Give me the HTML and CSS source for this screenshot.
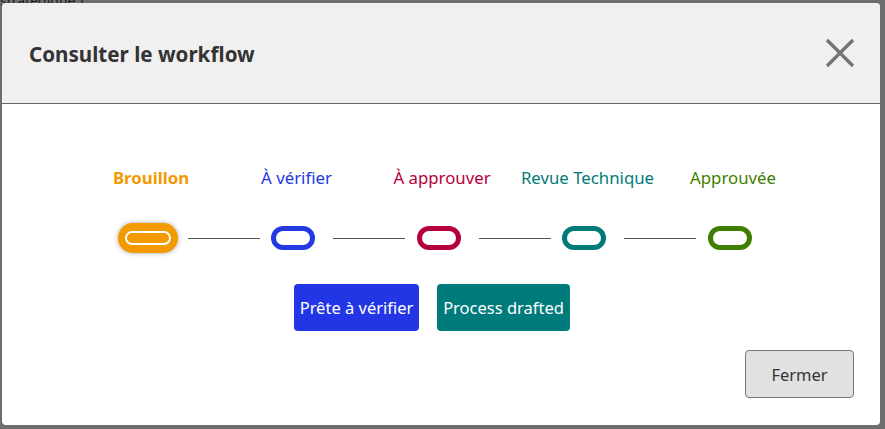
FILE: index.html
```html
<!DOCTYPE html>
<html lang="fr">
<head>
<meta charset="utf-8">
<title>Consulter le workflow</title>
<link rel="stylesheet" href="styles.css">
</head>
<body>
<div class="backdrop">
  <div class="behind">stratégique )</div>
  <div class="dialog">
    <header class="dialog-header">
      <h1 class="dialog-title">Consulter le workflow</h1>
      <button class="close-btn" aria-label="Fermer">
        <svg width="30" height="30" viewBox="0 0 30 30"><path d="M2 2 L28 28 M28 2 L2 28" stroke="#737373" stroke-width="3.2" fill="none"/></svg>
      </button>
    </header>
    <div class="dialog-body">
      <div class="labels">
        <span class="label label-draft">Brouillon</span>
        <span class="label label-verify">À vérifier</span>
        <span class="label label-approve">À approuver</span>
        <span class="label label-tech">Revue Technique</span>
        <span class="label label-done">Approuvée</span>
      </div>
      <div class="track">
        <div class="slot"><span class="pill pill-current"><span class="pill-inner"></span></span></div>
        <span class="line"></span>
        <div class="slot"><span class="pill pill-verify"></span></div>
        <span class="line"></span>
        <div class="slot"><span class="pill pill-approve"></span></div>
        <span class="line"></span>
        <div class="slot"><span class="pill pill-tech"></span></div>
        <span class="line"></span>
        <div class="slot"><span class="pill pill-done"></span></div>
      </div>
      <div class="actions">
        <button class="action action-verify">Prête à vérifier</button>
        <button class="action action-tech">Process drafted</button>
      </div>
    </div>
    <footer class="dialog-footer">
      <button class="close-footer">Fermer</button>
    </footer>
  </div>
</div>
</body>
</html>
```
FILE: styles.css
```css
* { box-sizing: border-box; }
html, body { margin: 0; padding: 0; }
body {
  font-family: "Noto Sans", "Open Sans", sans-serif;
  background: #6e6e6e;
  width: 885px;
  height: 429px;
  overflow: hidden;
}
.backdrop {
  position: relative;
  width: 885px;
  height: 429px;
  padding: 3px 5px 4px 2px;
}
.behind {
  position: absolute;
  left: 0;
  top: -9px;
  font-size: 14px;
  color: #1c1c1c;
}
.dialog {
  position: relative;
  width: 878px;
  height: 422px;
  background: #fff;
  border-radius: 4px;
  display: flex;
  flex-direction: column;
  overflow: hidden;
}
.dialog-header {
  height: 101px;
  flex: none;
  background: #f0f0f0;
  border-bottom: 1px solid #666;
  display: flex;
  align-items: center;
  justify-content: space-between;
  padding: 0 25px 0 27px;
}
.dialog-title {
  margin: 0;
  font-size: 20.6px;
  font-weight: 700;
  color: #333;
  padding-top: 2px;
}
.close-btn {
  border: 0;
  background: transparent;
  padding: 0;
  width: 30px;
  height: 30px;
  display: flex;
}
.dialog-body {
  flex: 1;
  display: flex;
  flex-direction: column;
  align-items: center;
  padding-top: 62px;
}
.labels {
  display: grid;
  grid-template-columns: repeat(5, 145.5px);
  justify-items: center;
  height: 24px;
  line-height: 24px;
  font-size: 16.8px;
  margin-left: 2px;
  white-space: nowrap;
}
.label-draft { color: #f39a00; font-weight: 700; }
.label-verify { color: #2339e2; }
.label-approve { color: #b5003b; }
.label-tech { color: #007b78; }
.label-done { color: #3f7e00; }
.track {
  display: flex;
  align-items: center;
  height: 30px;
  margin-top: 33px;
  margin-right: 5px;
}
.slot {
  width: 60px;
  display: flex;
  justify-content: center;
}
.line {
  width: 72px;
  height: 1px;
  background: #555;
  margin: 0 3.5px 0 10px;
}
.pill {
  display: block;
  width: 44px;
  height: 24px;
  border: 5px solid;
  border-radius: 12px;
  background: #fff;
}
.pill-verify { border-color: #2339e2; }
.pill-approve { border-color: #b5003b; }
.pill-tech { border-color: #007b78; }
.pill-done { border-color: #3f7e00; }
.pill-current {
  width: 62px;
  height: 30px;
  border: 0;
  border-radius: 15px;
  background: #f39a00;
  padding: 8px 7px;
  box-shadow: 0 0 5px rgba(0, 0, 0, 0.35);
}
.pill-inner {
  display: block;
  width: 100%;
  height: 100%;
  border: 2.5px solid #fff;
  border-radius: 7px;
}
.actions {
  display: flex;
  gap: 18px;
  margin-top: 31px;
  margin-right: 18px;
}
.action {
  height: 47px;
  border: 0;
  border-radius: 4px;
  color: #fff;
  font-family: inherit;
  font-size: 16.5px;
  padding: 0;
  white-space: nowrap;
}
.action-verify { background: #2336e6; width: 125px; }
.action-tech { background: #007b7b; width: 133px; }
.dialog-footer {
  flex: none;
  display: flex;
  justify-content: flex-end;
  padding: 0 26px 27px 0;
}
.close-footer {
  width: 109px;
  height: 48px;
  background: #e1e1e1;
  border: 1px solid #777;
  border-radius: 4px;
  font-family: inherit;
  font-size: 16.5px;
  color: #333;
}
```
